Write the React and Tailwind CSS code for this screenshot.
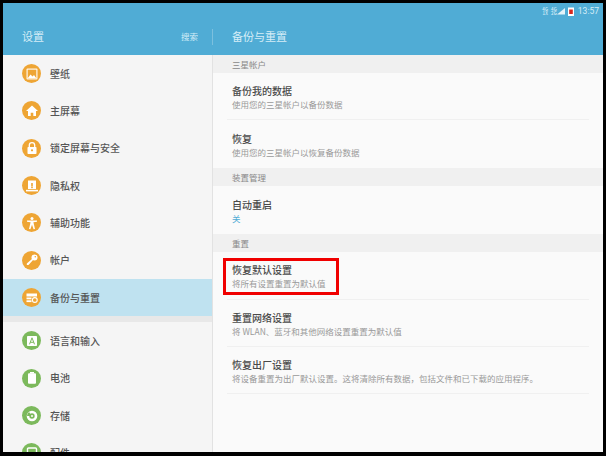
import React from 'react';

const Picture = () => (
  <svg viewBox="0 0 18 18" className="w-[18px] h-[18px]">
    <rect x="3.5" y="3.5" width="11" height="11" rx="1" fill="#fff" opacity="0.9" />
    <rect x="4.7" y="4.7" width="8.6" height="8.6" fill="#eea534" />
    <path d="M4.7 13.3 L7.5 9.5 L9.5 11.5 L11 10 L13.3 13.3 Z" fill="#fff" />
  </svg>
);
const Home = () => (
  <svg viewBox="0 0 18 18" className="w-[18px] h-[18px]">
    <path d="M9 3.5 L15 9 H13 V14 H10.3 V10.8 H7.7 V14 H5 V9 H3 Z" fill="#fff" />
  </svg>
);
const Lock = () => (
  <svg viewBox="0 0 18 18" className="w-[18px] h-[18px]">
    <path d="M6.3 8 V6.3 a2.7 2.7 0 0 1 5.4 0 V8" fill="none" stroke="#fff" strokeWidth="1.3" />
    <rect x="4.5" y="8" width="9" height="7" rx="0.8" fill="#fff" />
    <circle cx="9" cy="11.3" r="1.1" fill="#eea534" />
  </svg>
);
const Privacy = () => (
  <svg viewBox="0 0 18 18" className="w-[18px] h-[18px]">
    <path d="M5 3.5 H13 V12 H5 Z" fill="#fff" />
    <rect x="3" y="12.8" width="12" height="1.6" fill="#fff" />
    <rect x="8.2" y="6" width="1.6" height="3.6" fill="#eea534" />
    <rect x="8.2" y="10" width="1.6" height="1.2" fill="#eea534" />
  </svg>
);
const Person = () => (
  <svg viewBox="0 0 18 18" className="w-[18px] h-[18px]">
    <circle cx="9" cy="4.4" r="1.5" fill="#fff" />
    <path d="M4 6.4 L14 6.4 L14 7.7 L10.4 8.3 L12 15 L10.6 15.2 L9 10.8 L7.4 15.2 L6 15 L7.6 8.3 L4 7.7 Z" fill="#fff" />
  </svg>
);
const Key = () => (
  <svg viewBox="0 0 18 18" className="w-[18px] h-[18px]">
    <circle cx="11.5" cy="6.5" r="3" fill="#fff" />
    <path d="M9.5 7.5 L10.5 8.5 L5.5 14 L3.8 14 L3.8 12.4 Z" fill="#fff" />
    <circle cx="12.3" cy="5.7" r="0.8" fill="#eea534" />
  </svg>
);
const Backup = () => (
  <svg viewBox="0 0 18 18" className="w-[18px] h-[18px]">
    <rect x="3.5" y="4.5" width="10.5" height="3" fill="#fff" />
    <rect x="3.5" y="8.5" width="5" height="1.8" fill="#fff" />
    <rect x="3.5" y="11.3" width="5" height="1.8" fill="#fff" />
    <circle cx="11.8" cy="11" r="2.4" fill="none" stroke="#fff" strokeWidth="1.1" />
  </svg>
);
const Language = () => (
  <svg viewBox="0 0 18 18" className="w-[18px] h-[18px]">
    <rect x="4" y="4" width="10" height="10" rx="0.8" fill="#fff" />
    <path d="M6.5 12.3 L9 5.8 L11.5 12.3 M7.3 10.3 H10.7" fill="none" stroke="#7cb95c" strokeWidth="1" />
  </svg>
);
const Battery = () => (
  <svg viewBox="0 0 18 18" className="w-[18px] h-[18px]">
    <rect x="7" y="3" width="4" height="1.6" fill="#fff" />
    <rect x="5" y="4.2" width="8" height="10.5" rx="1" fill="#fff" />
  </svg>
);
const Storage = () => (
  <svg viewBox="0 0 18 18" className="w-[18px] h-[18px]">
    <circle cx="9" cy="9" r="4" fill="none" stroke="#fff" strokeWidth="2.6" />
    <path d="M9 9 L4 9 A5 5 0 0 1 6 5 Z" fill="#7cb95c" />
    <circle cx="9" cy="9" r="1" fill="#fff" />
  </svg>
);
const Accessory = () => (
  <svg viewBox="0 0 18 18" className="w-[18px] h-[18px]">
    <rect x="4.5" y="4" width="9" height="10" rx="1" fill="none" stroke="#fff" strokeWidth="1.4" />
  </svg>
);

const orange = 'bg-[#eea534]';
const green = 'bg-[#7cb95c]';

const SideItem = ({ color, icon, label, active }) => (
  <div className={`h-[37.33px] flex items-center pl-[19px] shrink-0 ${active ? 'bg-[#bfe2f0]' : ''}`}>
    <div className={`w-[19px] h-[19px] rounded-full flex items-center justify-center ${color}`}>{icon}</div>
    <span className="ml-[9px] text-[10px] leading-none font-medium text-[#555]">{label}</span>
  </div>
);

const Section = ({ children }) => (
  <div className="h-[18px] bg-[#f0f0f0] pl-[19px] flex items-center text-[8.5px] text-[#888]">{children}</div>
);

const Row = ({ title, sub, subBlue, line, h = 'h-[47px]' }) => (
  <div className={`${h} mx-[14px] pl-[5px] pt-[2px] flex flex-col justify-center ${line ? 'border-b border-[#f0f0f0]' : ''}`}>
    <div className="text-[10px] leading-[14px] font-medium text-[#4a4a4a]">{title}</div>
    <div className={`text-[8.5px] leading-[13px] whitespace-nowrap ${subBlue ? 'text-[#50acd5]' : 'text-[#999]'}`}>{sub}</div>
  </div>
);

const NetType = ({ top, bottom }) => (
  <div className="flex flex-col items-center text-[4.5px] leading-[4.5px] font-medium text-[#d5edf7]">
    <span>{top}</span>
    <span>{bottom}</span>
  </div>
);

export default function App() {
  return (
    <div
      className="w-[606px] h-[456px] bg-black pt-[3px] pb-[4px] px-[3px] overflow-hidden"
      style={{ fontFamily: '"Noto Sans CJK SC", "Liberation Sans", sans-serif' }}
    >
      <div className="relative w-full h-full flex flex-col overflow-hidden bg-[#fafafa]">
        <div className="h-[52px] bg-[#50acd5] flex flex-col shrink-0">
          <div className="h-[15px] pt-[1px] flex items-center justify-end pr-[4px] text-[#d5edf7]">
            <NetType top="4G" bottom="1X" />
            <div className="ml-[3px]">
              <NetType top="4G" bottom="2G" />
            </div>
            <svg viewBox="0 0 8 8" className="w-[8px] h-[8px]">
              <path d="M0 7.5 L8 7.5 L8 1 Z" fill="#e4f3f9" />
            </svg>
            <svg viewBox="0 0 6 9" className="w-[6px] h-[9px] ml-[3px]">
              <rect x="0" y="0.5" width="6" height="8.5" fill="#fff" />
              <rect x="1.2" y="2.5" width="3.6" height="4.5" fill="#d8281e" />
            </svg>
            <span className="text-[8.5px] leading-none ml-[4px]" style={{ fontFamily: 'Roboto, sans-serif' }}>13:57</span>
          </div>
          <div className="flex-1 flex items-center">
            <div className="w-[209px] flex items-center justify-between pl-[19px] pr-[14px] text-[#d5edf7]">
              <span className="text-[11px] leading-none">设置</span>
              <span className="text-[8.5px] leading-none">搜索</span>
            </div>
            <div className="w-px h-[16px] bg-[#7cc0de]" />
            <div className="pl-[19px] text-[11px] leading-none text-[#d5edf7]">备份与重置</div>
          </div>
        </div>

        <div className="flex-1 flex min-h-0">
          <div className="w-[209px] bg-[#f5f5f5] border-r border-[#e2e2e2] box-content shrink-0 flex flex-col overflow-hidden">
            <SideItem color={orange} icon={<Picture />} label="壁纸" />
            <SideItem color={orange} icon={<Home />} label="主屏幕" />
            <SideItem color={orange} icon={<Lock />} label="锁定屏幕与安全" />
            <SideItem color={orange} icon={<Privacy />} label="隐私权" />
            <SideItem color={orange} icon={<Person />} label="辅助功能" />
            <SideItem color={orange} icon={<Key />} label="帐户" />
            <SideItem color={orange} icon={<Backup />} label="备份与重置" active />
            <div className="h-[6px] bg-[#e8e8e8] shrink-0" />
            <SideItem color={green} icon={<Language />} label="语言和输入" />
            <SideItem color={green} icon={<Battery />} label="电池" />
            <SideItem color={green} icon={<Storage />} label="存储" />
            <SideItem color={green} icon={<Accessory />} label="配件" />
          </div>

          <div className="flex-1 min-w-0 flex flex-col">
            <Section>三星帐户</Section>
            <Row title="备份我的数据" sub="使用您的三星帐户以备份数据" line />
            <Row title="恢复" sub="使用您的三星帐户以恢复备份数据" h="h-[48px]" />
            <Section>装置管理</Section>
            <Row title="自动重启" sub="关" subBlue h="h-[48px]" />
            <Section>重置</Section>
            <Row title="恢复默认设置" sub="将所有设置重置为默认值" line h="h-[48px]" />
            <Row title="重置网络设置" sub="将 WLAN、蓝牙和其他网络设置重置为默认值" line />
            <Row title="恢复出厂设置" sub="将设备重置为出厂默认设置。这将清除所有数据，包括文件和已下载的应用程序。" line />
          </div>
        </div>

        <div className="absolute left-[220px] top-[255px] w-[116px] h-[37px] border-[3px] border-[#f00000]" />
      </div>
    </div>
  );
}
